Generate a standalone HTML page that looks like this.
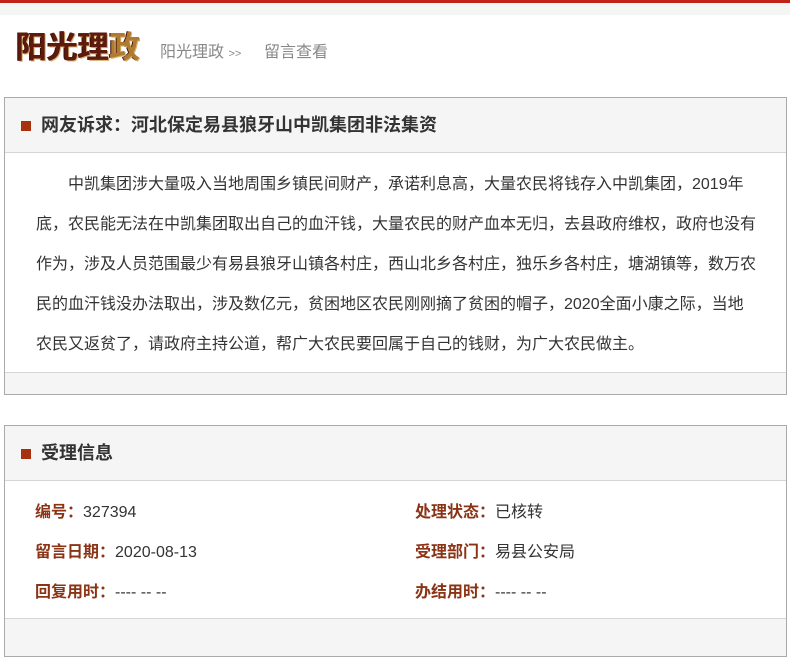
<!DOCTYPE html>
<html><head><meta charset="utf-8"><style>
body{margin:0;width:790px;height:642px;overflow:hidden;background:#fff;font-family:"Liberation Sans","Noto Sans CJK SC",sans-serif;position:relative}
.top{position:absolute;left:0;top:0;width:790px;height:3px;background:#c0221a}
.band{position:absolute;left:0;top:3px;width:790px;height:12px;background:#f3f6f3}
.logo{position:absolute;left:16px;top:29px;font-size:31px;font-weight:bold;letter-spacing:0;color:#5e1a0c;text-shadow:1px 1px 0 #d8b070,-1px 0 0 #3a1008;line-height:38px}
.logo span{color:#b07a30}
.bc{position:absolute;top:43px;font-size:16px;color:#888;line-height:20px}
.box{position:absolute;left:4px;width:781px;border:1px solid #aaa;background:#f5f5f5}
.hd{height:54px;border-bottom:1px solid #d6d6d6;position:relative}
.hd .sq{position:absolute;left:16px;top:23px;width:10px;height:10px;background:#a8320f}
.hd .t{position:absolute;left:36px;top:16px;font-size:18px;font-weight:bold;color:#333;line-height:22px}
.bd{background:#fff;border-bottom:1px solid #d6d6d6;position:relative}
.txt{position:absolute;left:31px;top:12px;font-size:16px;line-height:40px;color:#333;white-space:nowrap;letter-spacing:0}
.row{position:absolute;font-size:16px;color:#333;line-height:20px}
.row b{color:#8b3415}
</style></head><body>
<div class="top"></div><div class="band"></div>
<div class="logo">阳光理<span>政</span></div>
<div class="bc" style="left:160px">阳光理政 <span style="font-size:11px">&gt;&gt;</span></div>
<div class="bc" style="left:264px">留言查看</div>

<div class="box" style="top:97px;height:296px">
<div class="hd"><div class="sq"></div><div class="t">网友诉求：河北保定易县狼牙山中凯集团非法集资</div></div>
<div class="bd" style="height:219px">
<div class="txt">　　中凯集团涉大量吸入当地周围乡镇民间财产，承诺利息高，大量农民将钱存入中凯集团，2019年<br>底，农民能无法在中凯集团取出自己的血汗钱，大量农民的财产血本无归，去县政府维权，政府也没有<br>作为，涉及人员范围最少有易县狼牙山镇各村庄，西山北乡各村庄，独乐乡各村庄，塘湖镇等，数万农<br>民的血汗钱没办法取出，涉及数亿元，贫困地区农民刚刚摘了贫困的帽子，2020全面小康之际，当地<br>农民又返贫了，请政府主持公道，帮广大农民要回属于自己的钱财，为广大农民做主。</div>
</div>
</div>

<div class="box" style="top:425px;height:230px">
<div class="hd"><div class="sq"></div><div class="t">受理信息</div></div>
<div class="bd" style="height:137px">
<div class="row" style="left:30px;top:22px"><b>编号：</b>327394</div>
<div class="row" style="left:410px;top:22px"><b>处理状态：</b>已核转</div>
<div class="row" style="left:30px;top:62px"><b>留言日期：</b>2020-08-13</div>
<div class="row" style="left:410px;top:62px"><b>受理部门：</b>易县公安局</div>
<div class="row" style="left:30px;top:102px"><b>回复用时：</b>---- -- --</div>
<div class="row" style="left:410px;top:102px"><b>办结用时：</b>---- -- --</div>
</div>
</div>
</body></html>
